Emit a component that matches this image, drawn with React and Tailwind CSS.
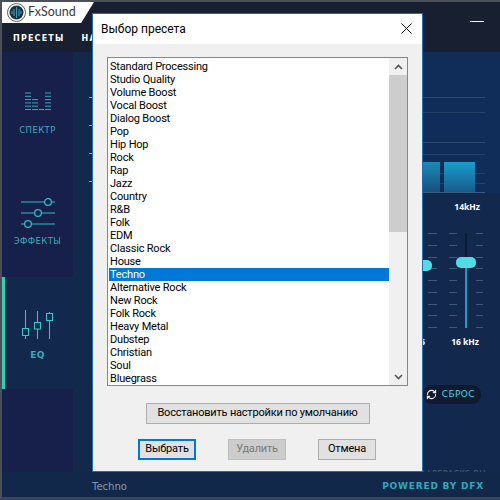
import { RefreshCw } from "lucide-react";

const presets = [
  "Standard Processing", "Studio Quality", "Volume Boost", "Vocal Boost", "Dialog Boost", "Pop", "Hip Hop", "Rock", "Rap", "Jazz",
  "Country", "R&B", "Folk", "EDM", "Classic Rock", "House", "Techno", "Alternative Rock", "New Rock", "Folk Rock",
  "Heavy Metal", "Dubstep", "Christian", "Soul", "Bluegrass",
];

const ticks = [0, 1, 2, 3, 4, 5, 6, 7, 8];
const graphLines = [
  { id: 1, cls: "mt-[45px] bg-[#2a4a72]" },
  { id: 2, cls: "mt-[14px] bg-[#234268]" },
  { id: 3, cls: "mt-[29px] bg-[#2a4a72]" },
  { id: 4, cls: "mt-[11px] bg-[#234268]" },
  { id: 5, cls: "mt-[18px] bg-[#234268]" },
  { id: 6, cls: "mt-[9px] bg-[#234268]" },
  { id: 7, cls: "mt-[8px] bg-[#3d5d80]" },
];

const SpectrumIcon = () => (
  <svg width="26" height="19" viewBox="0 0 26 19" stroke="#36a9bd" strokeWidth="1">
    {[0, 1, 2, 3, 4, 5].map((i) => <path key={i} d={`M0 ${i * 3.3 + 1}h6M20 ${i * 3.3 + 1}h6`} />)}
    {[2, 3, 4, 5].map((i) => <path key={i} d={`M7 ${i * 3.3 + 1}h6`} />)}
    <path d="M14 17.5h5" />
  </svg>
);

const EffectsIcon = () => (
  <svg width="36" height="30" viewBox="0 0 36 30" fill="none" stroke="#35b8c8" strokeWidth="1">
    <path d="M1 4h34M1 15h34M1 26h34" />
    <circle cx="28" cy="4" r="3.4" fill="#17204a" strokeWidth="1.3" />
    <circle cx="18" cy="15" r="3.4" fill="#17204a" strokeWidth="1.3" />
    <circle cx="8" cy="26" r="3.4" fill="#17204a" strokeWidth="1.3" />
  </svg>
);

const EqIcon = () => (
  <svg width="32" height="30" viewBox="0 0 32 30" fill="none" stroke="#35c8cc" strokeWidth="1">
    <path d="M3.5 0v18M3.5 26v3M15.5 1v11M15.5 19v10M27.5 2v1M27.5 10v19" />
    <rect x="0.5" y="18.5" width="6" height="7" />
    <rect x="12.5" y="12.5" width="6" height="6.5" />
    <rect x="24.5" y="3.5" width="6" height="7" />
  </svg>
);

const Ticks = ({ width }) => (
  <div className={`flex flex-col justify-between h-[95px] ${width}`}>
    {ticks.map((t) => <div key={t} className="h-[1px] bg-[#3b5a7c]" />)}
  </div>
);

const WinButton = ({ children, className = "" }) => (
  <div className={`flex items-center justify-center h-[21px] border text-[11px] tracking-[-0.2px] whitespace-nowrap ${className}`}>{children}</div>
);

export default function App() {
  return (
    <div className="relative w-[500px] h-[500px] overflow-hidden bg-[#12284a] border-t-[2px] border-l-[2px] border-b-[3px] border-[#4a4f58] border-b-[#39465c] font-['DejaVu_Sans',sans-serif]">
      <div className="flex flex-col h-full">
        {/* шапка */}
        <div className="flex h-[21px] bg-[#171f30] shrink-0">
          <div className="flex items-center gap-[2px] w-[92px] pl-[5px] bg-white [clip-path:polygon(0_0,100%_0,86%_100%,0_100%)]">
            <svg width="19" height="19" viewBox="0 0 19 19">
              <circle cx="9.5" cy="9.5" r="9" fill="none" stroke="#2b3a46" strokeWidth="0.8" />
              <circle cx="9.5" cy="9.5" r="7" fill="#1c2f3c" />
              <path d="M5 8v3M7 6v7M9.5 4v11M12 6v7M14 8v3" stroke="#3f9fbf" strokeWidth="1.1" />
            </svg>
            <span className="text-[12.5px] leading-none text-[#3a3a3a] font-['Lato',sans-serif]">FxSound</span>
          </div>
          <div className="flex-1 flex justify-end items-end pr-[16px]">
            <div className="w-[14px] h-[1px] mb-[1px] bg-white" />
          </div>
        </div>
        <div className="flex h-[29px] items-center gap-[17px] pl-[11px] pt-[2px] bg-[#171f30] shrink-0 text-[8px] font-bold tracking-[1.2px] text-white">
          <span>ПРЕСЕТЫ</span>
          <span>НАСТРОЙКИ</span>
        </div>

        {/* основная часть */}
        <div className="flex flex-1 min-h-0">
          <div className="flex flex-col w-[71px] bg-[#17204a] shrink-0 text-[8.5px] leading-[10px] tracking-[0.4px] text-[#3fa9bd]">
            <div className="flex flex-col items-center h-[103px] pt-[40px]">
              <SpectrumIcon />
              <span className="mt-[14px]">СПЕКТР</span>
            </div>
            <div className="flex flex-col items-center h-[122px] pt-[43px]">
              <EffectsIcon />
              <span className="mt-[8px]">ЭФФЕКТЫ</span>
            </div>
            <div className="flex flex-col items-center h-[112px] pt-[33px] pr-[3px] bg-[#12294d] border-l-[3px] border-[#2fd3b4]">
              <EqIcon />
              <span className="mt-[10px] font-bold text-[9px]">EQ</span>
            </div>
          </div>
          <div className="flex flex-col items-end gap-[27px] w-[19px] pt-[45px] bg-[#12294b] shrink-0">
            <div className="w-[3px] h-[1px] bg-[#8fa3b8]" />
            <div className="w-[3px] h-[1px] bg-[#8fa3b8]" />
            <div className="w-[3px] h-[1px] bg-[#8fa3b8]" />
            <div className="w-[3px] h-[1px] bg-[#8fa3b8]" />
          </div>

          <div className="flex-1 flex flex-col bg-[#12294d]">
            {/* график */}
            <div className="relative h-[141px] pr-[15px] bg-[#102c58]">
              {graphLines.map((l) => <div key={l.id} className={`h-[1px] ${l.cls}`} />)}
              <div className="absolute bottom-[1px] right-[60px] w-[50px] h-[30px] bg-gradient-to-b from-[#1a8cb6] to-[#16507f]" />
              <div className="absolute bottom-[1px] right-[25px] w-[31px] h-[30px] bg-gradient-to-b from-[#1a9dca] to-[#165c8c]" />
            </div>
            <div className="flex justify-end items-center h-[29px] pr-[20px] text-[8.5px] font-bold text-white font-['Open_Sans',sans-serif]">14kHz</div>

            {/* ползунки */}
            <div className="flex justify-end mt-[11px] pr-[17px]">
              <div className="relative w-[2px] h-[95px] mr-[5px] bg-[#1689b0]">
                <div className="absolute left-[-9px] top-[27px] w-[20px] h-[11px] rounded-[5px] bg-[#4fdce6]" />
              </div>
              <Ticks width="w-[9px]" />
              <div className="w-[12px]" />
              <Ticks width="w-[8px]" />
              <div className="relative w-[2px] h-[95px] ml-[8px] mr-[9px] bg-gradient-to-b from-[#0d1a33] from-[30%] to-[#1a9cc4] to-[30%]">
                <div className="absolute left-[-9px] top-[24px] w-[20px] h-[11px] rounded-[5px] bg-[#4fdce6]" />
              </div>
              <Ticks width="w-[7px]" />
            </div>
            <div className="flex justify-end items-center h-[28px] pr-[21px] text-[8.5px] font-bold text-white font-['Open_Sans',sans-serif]">
              <span className="mr-[26px]">5</span>
              <span>16 kHz</span>
            </div>

            {/* сброс */}
            <div className="flex justify-end mt-[29px] pr-[19px]">
              <div className="flex items-center gap-[5px] h-[19px] pl-[3px] pr-[6px] rounded-[9px] bg-[#0f1a30] text-[9px] tracking-[0.4px] text-[#4fd0e0]">
                <RefreshCw size={11} color="#e8eef2" strokeWidth={2.4} />
                <span>СБРОС</span>
              </div>
            </div>

            <div className="mt-auto mb-[-8px] pr-[3px] text-right text-[8px] leading-[10px] tracking-[0.4px] text-[#4a6079] whitespace-nowrap">REPACKED BY LPEPACKS.RU —</div>
          </div>
        </div>

        {/* подвал */}
        <div className="flex items-center justify-between h-[25px] pt-[4px] pl-[90px] pr-[16px] bg-[#12284a] shrink-0">
          <span className="text-[10px] text-[#8a97a5]">Techno</span>
          <span className="text-[9px] font-bold tracking-[0.8px] text-[#31a9bd]">POWERED BY DFX</span>
        </div>
      </div>

      {/* диалог */}
      <div className="absolute left-[90px] top-[11px] flex flex-col w-[331px] h-[459px] bg-[#f0f0f0] border border-[#1f6fb0] font-['Roboto',sans-serif]">
        <div className="flex items-center justify-between h-[30px] pl-[8px] pr-[10px] bg-white shrink-0">
          <span className="text-[12px] text-black">Выбор пресета</span>
          <svg className="mb-[1px]" width="11" height="11" viewBox="0 0 11 11" stroke="#111" strokeWidth="1"><path d="M0.5 0.5l10 10M10.5 0.5l-10 10" /></svg>
        </div>
        <div className="flex flex-col items-center px-[14px] pt-[13px]">
          <div className="flex w-full h-[329px] bg-white border border-[#828790]">
            <div className="flex-1 pt-[2px] pl-[1px]">
              {presets.map((p) => (
                <div key={p} className={`h-[13px] pl-[1px] text-[11px] tracking-[-0.2px] leading-[13px] ${p === "Techno" ? "bg-[#0078d7] text-white" : "text-black"}`}>{p}</div>
              ))}
            </div>
            <div className="flex flex-col w-[18px] bg-[#f0f0f0]">
              <div className="flex items-center justify-center h-[17px]">
                <svg width="9" height="6" viewBox="0 0 9 6" fill="none" stroke="#555" strokeWidth="1.6"><path d="M1 5l3.5-3.5L8 5" /></svg>
              </div>
              <div className="h-[157px] bg-[#cdcdcd]" />
              <div className="flex-1" />
              <div className="flex items-center justify-center h-[17px]">
                <svg width="9" height="6" viewBox="0 0 9 6" fill="none" stroke="#555" strokeWidth="1.6"><path d="M1 1l3.5 3.5L8 1" /></svg>
              </div>
            </div>
          </div>
          <WinButton className="w-[224px] mt-[17px] bg-[#e1e1e1] border-[#adadad] text-black">Восстановить настройки по умолчанию</WinButton>
          <div className="flex w-full mt-[15px] pl-[31px] gap-[32px]">
            <WinButton className="w-[58px] bg-[#e1e1e1] border-2 border-[#0078d7] text-black">Выбрать</WinButton>
            <WinButton className="w-[58px] bg-[#cccccc] border-[#bfbfbf] text-[#7a7a7a]">Удалить</WinButton>
            <WinButton className="w-[58px] bg-[#e1e1e1] border-[#adadad] text-black">Отмена</WinButton>
          </div>
        </div>
      </div>
    </div>
  );
}
